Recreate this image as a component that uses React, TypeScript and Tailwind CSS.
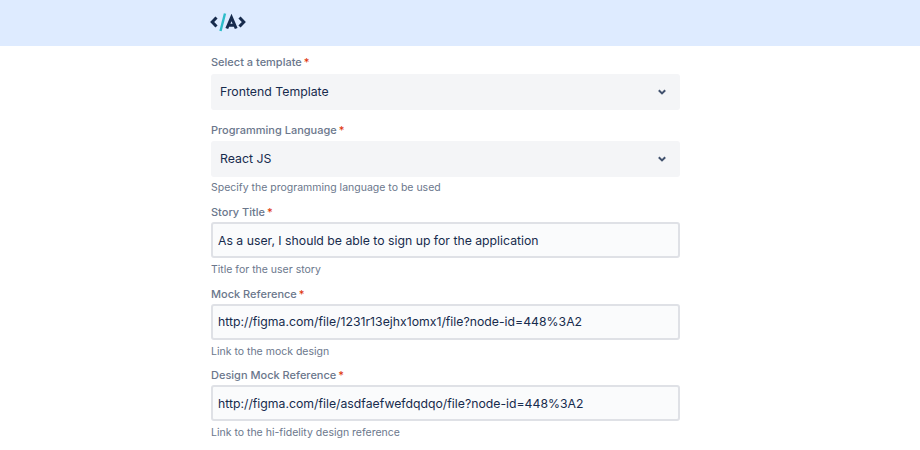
function Chevron() {
  return (
    <svg width="8" height="6" viewBox="0 0 8 6" fill="none" stroke="#42526e" strokeWidth="2" className="block">
      <path d="M0.8 1.2L4 4.4L7.2 1.2" />
    </svg>
  )
}

function Label({ text }: { text: string }) {
  return (
    <label className="flex h-[16px] items-center text-[11px] font-medium leading-4 text-[#6b778c]">
      {text}
      <span className="ml-[2px] text-[#de350b]">*</span>
    </label>
  )
}

function Select({ label, value, mt, gap }: { label: string; value: string; mt: string; gap: string }) {
  return (
    <div className={mt}>
      <Label text={label} />
      <div className={`${gap} flex h-[36px] items-center justify-between rounded-[3px] bg-[#f4f5f7] pl-[9px] pr-[14px]`}>
        <span className="text-[12.3px] text-[#172b4d]">{value}</span>
        <Chevron />
      </div>
    </div>
  )
}

function Field({ label, value, help }: { label: string; value: string; help: string }) {
  return (
    <div className="mb-[7.5px]">
      <Label text={label} />
      <input
        readOnly
        value={value}
        className="mt-[2px] block h-[36px] w-full rounded-[3px] border-2 border-[#dfe1e6] bg-[#fafbfc] px-[5px] text-[12.25px] text-[#172b4d] outline-none"
      />
      <p className="mt-[4px] text-[10.5px] leading-4 text-[#6b778c]">{help}</p>
    </div>
  )
}

export default function App() {
  return (
    <div className="h-[450px] w-[920px] overflow-hidden bg-white font-['Inter',sans-serif]">
      <header className="h-[46px] bg-[#deebff] pl-[210px] pt-[13px]">
        <svg width="36" height="19" viewBox="0 0 36 19" fill="none" className="block">
          <path d="M6.5 4.5L2.2 9L6.5 13.5" stroke="#172b4d" strokeWidth="3" />
          <path d="M15 0.5L10.5 18" stroke="#2bbcc9" strokeWidth="2.4" />
          <path d="M16.8 15.5L21.5 4.5L26.2 15.5M18.5 12.3H24.5" stroke="#172b4d" strokeWidth="3" />
          <path d="M29.5 4.5L33.8 9L29.5 13.5" stroke="#172b4d" strokeWidth="3" />
        </svg>
      </header>
      <main className="ml-[211px] w-[469px]">
        <Select mt="mt-[8px]" gap="mt-[4px]" label="Select a template" value="Frontend Template" />
        <Select mt="mt-[12px]" gap="mt-[3px]" label="Programming Language" value="React JS" />
        <p className="mb-[8px] mt-[3px] text-[10.5px] leading-4 text-[#6b778c]">Specify the programming language to be used</p>
        <Field
          label="Story Title"
          value="As a user, I should be able to sign up for the application"
          help="Title for the user story"
        />
        <Field
          label="Mock Reference"
          value="http://figma.com/file/1231r13ejhx1omx1/file?node-id=448%3A2"
          help="Link to the mock design"
        />
        <Field
          label="Design Mock Reference"
          value="http://figma.com/file/asdfaefwefdqdqo/file?node-id=448%3A2"
          help="Link to the hi-fidelity design reference"
        />
      </main>
    </div>
  )
}
